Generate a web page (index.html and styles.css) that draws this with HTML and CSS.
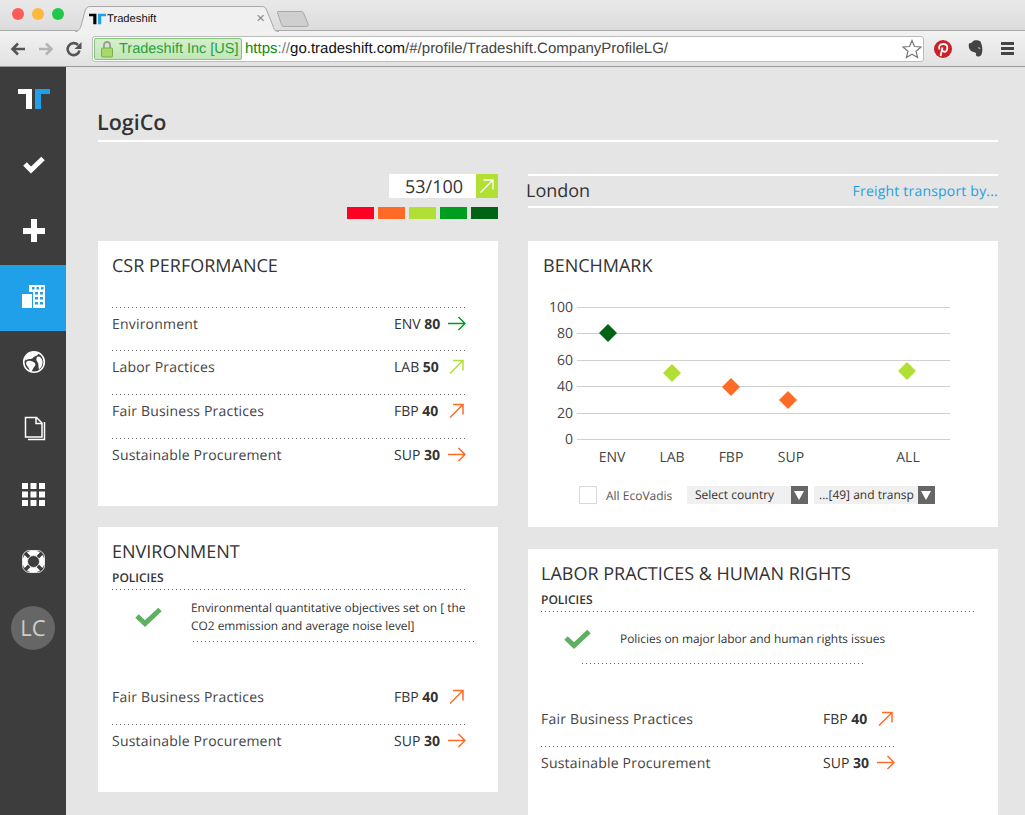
FILE: index.html
```html
<!DOCTYPE html>
<html lang="en">
<head>
	<meta charset="UTF-8">
	<title>Tradeshift</title>
	<link rel="stylesheet" href="styles.css">
</head>
<body>

	<!-- Browser window top -->
	<div class="tabstrip">
		<div class="lights">
			<span class="light light-red"></span>
			<span class="light light-yellow"></span>
			<span class="light light-green"></span>
		</div>
		<div class="tab">
			<svg class="tab-shape" width="204" height="26" viewBox="0 0 204 26">
				<path d="M0 25.500C3 25.500 4.500 24 6 20L10 5C11 2 12.500 .5 15 .5H187C190 .5 191 2 192 5L198 20C199 24 200 25.500 204 25.500" fill="#f0f0f0" stroke="#a8a8a8"/>
			</svg>
			<svg class="favicon" width="17" height="12" viewBox="0 0 32 20">
				<path d="M0 0H14V20H8V5H0Z" fill="#000"/>
				<path d="M17 0H32V5H23V20H17Z" fill="#1fa0e8"/>
			</svg>
			<span class="tab-title">Tradeshift</span>
			<span class="tab-close">&#215;</span>
		</div>
		<svg class="newtab" width="32" height="18" viewBox="0 0 32 18">
			<path d="M1 1.500H24C26 1.500 26.500 2.500 27 4L31 14C31.500 16 30.500 16.500 29 16.500H7C5.500 16.500 5 16 4.500 14.500L.5 3C.3 2 .5 1.500 1 1.500Z" fill="#cfcfcf" stroke="#a8a8a8"/>
		</svg>
	</div>

	<div class="toolbar">
		<svg class="nav-icon" width="16" height="14" viewBox="0 0 16 14"><path d="M15 7H3M8 1.500L2.500 7L8 12.500" fill="none" stroke="#555" stroke-width="2.600"/></svg>
		<svg class="nav-icon nav-forward" width="16" height="14" viewBox="0 0 16 14"><path d="M1 7H13M8 1.500L13.500 7L8 12.500" fill="none" stroke="#b4b4b4" stroke-width="2.600"/></svg>
		<svg class="nav-icon nav-reload" width="16" height="16" viewBox="0 0 16 16"><path d="M13.500 9.500A6 6 0 1 1 12 4" fill="none" stroke="#555" stroke-width="2.600"/><path d="M15.500 1V8H8.500Z" fill="#555"/></svg>
		<div class="omnibox">
			<div class="ev-chip">
				<svg width="12" height="18" viewBox="0 0 12 18"><path d="M3 8V5A3 3 0 0 1 9 5V8" fill="none" stroke="#9a9a9a" stroke-width="1.800"/><rect x=".5" y="8" width="11" height="9" rx="1" fill="#a5d96b" stroke="#7cb04a"/></svg>
				<span>Tradeshift Inc [US]</span>
			</div>
			<div class="url"><span class="url-https">https</span><span class="url-sep">://</span><span class="url-host">go.tradeshift.com</span><span class="url-path">/#/profile/Tradeshift.CompanyProfileLG/</span></div>
			<svg class="star" width="20" height="20" viewBox="0 0 20 20"><path d="M10 1.500L12.500 7.500L19 8L14 12.200L15.600 18.500L10 15.200L4.400 18.500L6 12.200L1 8L7.500 7.500Z" fill="#fff" stroke="#777" stroke-width="1.200"/></svg>
		</div>
		<svg class="ext-pin" width="18" height="18" viewBox="0 0 18 18"><circle cx="9" cy="9" r="9" fill="#cb2027"/><path d="M6.500 16L8.500 7.500M5.500 9.500C4 6 6.500 4 9.300 4C12 4 13.700 5.700 13.300 8.500C13 10.700 11.500 12 10 11.700C9 11.500 8.500 11 8.300 10.300" fill="none" stroke="#fff" stroke-width="1.800"/></svg>
		<svg class="ext-note" width="15" height="17" viewBox="0 0 15 17"><path d="M3 3L6 .5C8 0 11 .3 12.500 1.500C14 5 15 9 14 13C13.500 15.500 12 17 9.500 16.500C8 16 7.500 14.500 8 13C6 12 3 11.500 2 10C.5 8 .5 5 1 3.500Z" fill="#444"/><path d="M10 8C11 7.500 12 8 12 9" fill="none" stroke="#ddd"/></svg>
		<div class="menu-icon"><span></span><span></span><span></span></div>
	</div>

	<div class="app">
		<!-- Sidebar -->
		<div class="sidebar">
			<div class="side-item side-logo">
				<svg width="32" height="20" viewBox="0 0 32 20">
					<path d="M0 0H14V20H8V5H0Z" fill="#fff"/>
					<path d="M17 0H32V5H23V20H17Z" fill="#1fa0e8"/>
				</svg>
			</div>
			<div class="side-item">
				<svg width="30" height="30" viewBox="0 0 30 30"><path d="M7 13L13 19L25 7.500" fill="none" stroke="#fff" stroke-width="5"/></svg>
			</div>
			<div class="side-item">
				<svg width="30" height="30" viewBox="0 0 30 30"><path d="M13 2H19V11H27V17H19V25H13V17H5V11H13Z" fill="#fff"/></svg>
			</div>
			<div class="side-item side-active">
				<svg width="30" height="30" viewBox="0 0 30 30">
					<rect x="4" y="11" width="10" height="14" fill="#fff"/>
					<path d="M11 2H27V25H15V9H11Z" fill="#fff"/>
					<g fill="#1fa0e8">
						<rect x="14" y="4" width="2.500" height="2.500"/><rect x="18.500" y="4" width="2.500" height="2.500"/><rect x="23" y="4" width="2.500" height="2.500"/>
						<rect x="17" y="9" width="3" height="2.500"/><rect x="22" y="9" width="3" height="2.500"/>
						<rect x="17" y="14" width="3" height="2.500"/><rect x="22" y="14" width="3" height="2.500"/>
						<rect x="17" y="19" width="3" height="2.500"/><rect x="22" y="19" width="3" height="2.500"/>
					</g>
				</svg>
			</div>
			<div class="side-item">
				<svg width="30" height="30" viewBox="0 0 30 30">
					<circle cx="16" cy="13" r="10.300" fill="none" stroke="#fff" stroke-width="1.600"/>
					<path d="M10 4C14 2 19 2.500 20.500 5C18.500 7.500 16 7 15 9C13 10.500 9.500 9.500 7.500 11.500C6.500 8.500 8 5.500 10 4Z" fill="#fff"/>
					<path d="M8.500 12.500C11 11 13.500 12 15.500 13C18 14 18 16.500 16 18C15 19.500 14.500 21.500 13 23C11 21.500 11.500 19.500 10 18C8.500 16.500 7.500 14.500 8.500 12.500Z" fill="#fff"/>
					<path d="M19.500 7.500C21.500 7 24 9 24.500 12C25 15 23.500 18.500 21 20.500C20 17.500 21 14.500 19.500 13C18 11.500 18 9 19.500 7.500Z" fill="#fff"/>
				</svg>
			</div>
			<div class="side-item">
				<svg width="30" height="30" viewBox="0 0 30 30">
					<path d="M10 24.500H26.500V7" fill="none" stroke="#fff" stroke-width="1.500"/>
					<path d="M7.500 2.500H18.500L24 8V22H7.500Z" fill="#3d3d3d" stroke="#fff" stroke-width="1.500"/>
					<path d="M18 2.500V8.500H24" fill="none" stroke="#fff" stroke-width="1.500"/>
				</svg>
			</div>
			<div class="side-item">
				<svg width="30" height="30" viewBox="0 0 30 30">
					<g fill="#fff">
						<rect x="4" y="2" width="6" height="6"/><rect x="12.500" y="2" width="6" height="6"/><rect x="21" y="2" width="6" height="6"/>
						<rect x="4" y="10.500" width="6" height="6"/><rect x="12.500" y="10.500" width="6" height="6"/><rect x="21" y="10.500" width="6" height="6"/>
						<rect x="4" y="19" width="6" height="6"/><rect x="12.500" y="19" width="6" height="6"/><rect x="21" y="19" width="6" height="6"/>
					</g>
				</svg>
			</div>
			<div class="side-item">
				<svg width="30" height="30" viewBox="0 0 30 30">
					<circle cx="15.500" cy="14.500" r="11" fill="#fff"/>
					<path d="M5 4L26 25M26 4L5 25" stroke="#3d3d3d" stroke-width="3.600"/>
					<rect x="4.500" y="3.500" width="22" height="22" rx="7" fill="none" stroke="#e4e4e4"/>
					<circle cx="15.500" cy="14.500" r="6" fill="#3d3d3d" stroke="#e4e4e4"/>
				</svg>
			</div>
			<div class="side-item">
				<div class="avatar">LC</div>
			</div>
		</div>

		<!-- Main -->
		<div class="main">
			<h1 class="page-title"><span>LogiCo</span></h1>
			<div class="columns">
				<div class="col col-left">
					<div class="score-head">
						<div class="score">
							<div class="score-value">53/100</div>
							<div class="score-arrow">
								<svg width="16" height="16" viewBox="0 0 16 16"><path d="M1.500 14.500L14 2M4.500 2H14V11.500" fill="none" stroke="#fff" stroke-width="1.300"/></svg>
							</div>
						</div>
						<div class="scale">
							<span class="scale-red"></span>
							<span class="scale-orange"></span>
							<span class="scale-lime"></span>
							<span class="scale-green"></span>
							<span class="scale-dark"></span>
						</div>
					</div>

					<div class="card card-csr">
						<div class="card-title">CSR Performance</div>
						<div class="rows rows-csr">
							<div class="row"><span class="row-name">Environment</span><span class="row-val">ENV <b>80</b></span>
								<svg class="arrow arrow-green" width="20" height="20" viewBox="0 0 20 20"><path d="M2 9.500H18.500M12.500 3L19 9.500L12.500 16"/></svg></div>
							<div class="row"><span class="row-name">Labor Practices</span><span class="row-val">LAB <b>50</b></span>
								<svg class="arrow arrow-lime" width="20" height="20" viewBox="0 0 20 20"><path d="M4 16.500L17 3.500M7 3.500H17V13.500"/></svg></div>
							<div class="row"><span class="row-name">Fair Business Practices</span><span class="row-val">FBP <b>40</b></span>
								<svg class="arrow arrow-orange" width="20" height="20" viewBox="0 0 20 20"><path d="M4 16.500L17 3.500M7 3.500H17V13.500"/></svg></div>
							<div class="row"><span class="row-name">Sustainable Procurement</span><span class="row-val">SUP <b>30</b></span>
								<svg class="arrow arrow-orange" width="20" height="20" viewBox="0 0 20 20"><path d="M2 9.500H18.500M12.500 3L19 9.500L12.500 16"/></svg></div>
						</div>
					</div>

					<div class="card card-env">
						<div class="card-title">Environment</div>
						<div class="policies-label">Policies</div>
						<div class="dots dots-env"></div>
						<div class="policy">
							<svg class="policy-check" width="27" height="20" viewBox="0 0 27 20"><path d="M2 9L10 16.500L25 2.500" fill="none" stroke="#5cb05f" stroke-width="5"/></svg>
							<p>Environmental quantitative objectives set on [ the CO2 emmission and average noise level]</p>
						</div>
						<div class="dots dots-short-env"></div>
						<div class="rows rows-policy">
							<div class="row"><span class="row-name">Fair Business Practices</span><span class="row-val">FBP <b>40</b></span>
								<svg class="arrow arrow-orange" width="20" height="20" viewBox="0 0 20 20"><path d="M4 16.500L17 3.500M7 3.500H17V13.500"/></svg></div>
							<div class="row"><span class="row-name">Sustainable Procurement</span><span class="row-val">SUP <b>30</b></span>
								<svg class="arrow arrow-orange" width="20" height="20" viewBox="0 0 20 20"><path d="M2 9.500H18.500M12.500 3L19 9.500L12.500 16"/></svg></div>
						</div>
					</div>
				</div>

				<div class="col col-right">
					<div class="location-head">
						<div class="location">
							<span class="location-city">London</span>
							<a class="location-link">Freight transport by...</a>
						</div>
					</div>

					<div class="card card-bench">
						<div class="card-title">Benchmark</div>
						<svg class="chart" width="440" height="175" viewBox="0 0 440 175">
							<g stroke="#d0d0d0">
								<path d="M34 12.500H407"/><path d="M34 38.500H407"/><path d="M34 65.500H407"/>
								<path d="M34 91.500H407"/><path d="M34 118.500H407"/><path d="M34 144.500H407"/>
							</g>
							<g class="chart-y" text-anchor="end">
								<text x="30" y="17">100</text><text x="30" y="43">80</text><text x="30" y="70">60</text>
								<text x="30" y="96">40</text><text x="30" y="123">20</text><text x="30" y="149">0</text>
							</g>
							<g class="chart-x" text-anchor="middle">
								<text x="69" y="167">ENV</text><text x="129" y="167">LAB</text><text x="188" y="167">FBP</text>
								<text x="248" y="167">SUP</text><text x="365" y="167">ALL</text>
							</g>
							<path d="M65 29L74 38L65 47L56 38Z" fill="#006414"/>
							<path d="M129 69L138 78L129 87L120 78Z" fill="#b2df33"/>
							<path d="M188 83L197 92L188 101L179 92Z" fill="#ff6b26"/>
							<path d="M245 96L254 105L245 114L236 105Z" fill="#ff6b26"/>
							<path d="M364 67L373 76L364 85L355 76Z" fill="#b2df33"/>
						</svg>
						<div class="filters">
							<span class="checkbox"></span>
							<span class="filter-label">All EcoVadis</span>
							<div class="select select-country"><span>Select country</span><i></i></div>
							<div class="select select-sector"><span>...[49] and transp</span><i></i></div>
						</div>
					</div>

					<div class="card card-labor">
						<div class="card-title">Labor Practices &amp; Human Rights</div>
						<div class="policies-label">Policies</div>
						<div class="dots dots-labor"></div>
						<div class="policy">
							<svg class="policy-check" width="27" height="20" viewBox="0 0 27 20"><path d="M2 9L10 16.500L25 2.500" fill="none" stroke="#5cb05f" stroke-width="5"/></svg>
							<p>Policies on major labor and human rights issues</p>
						</div>
						<div class="dots dots-short-labor"></div>
						<div class="rows rows-policy">
							<div class="row"><span class="row-name">Fair Business Practices</span><span class="row-val">FBP <b>40</b></span>
								<svg class="arrow arrow-orange" width="20" height="20" viewBox="0 0 20 20"><path d="M4 16.500L17 3.500M7 3.500H17V13.500"/></svg></div>
							<div class="row"><span class="row-name">Sustainable Procurement</span><span class="row-val">SUP <b>30</b></span>
								<svg class="arrow arrow-orange" width="20" height="20" viewBox="0 0 20 20"><path d="M2 9.500H18.500M12.500 3L19 9.500L12.500 16"/></svg></div>
						</div>
					</div>
				</div>
			</div>
		</div>
	</div>

</body>
</html>
```

FILE: styles.css
```css
/* Global */
* {
	box-sizing: border-box;
}

html, body {
	height: 100%;
}

body {
	margin: 0;
	overflow: hidden;
	font-family: 'Open Sans', sans-serif;
	text-rendering: geometricPrecision;
	color: #333;
	background: #e5e5e5;
	display: flex;
	flex-direction: column;
}

/* Browser tab strip */
.tabstrip {
	height: 31px;
	flex: none;
	display: flex;
	align-items: flex-start;
	background: linear-gradient(#e9e9e9, #dcdcdc);
	border-bottom: 1px solid #ababab;
	font-family: 'Liberation Sans', sans-serif;
}

.lights {
	display: flex;
	gap: 8px;
	padding: 8px 0 0 12px;
	width: 75px;
}

.light {
	width: 12px;
	height: 12px;
	border-radius: 50%;
}

.light-red { background: #fc5b57; }
.light-yellow { background: #fdb83d; }
.light-green { background: #1fc94a; }

.tab {
	position: relative;
	width: 204px;
	height: 31px;
	margin-top: 6px;
	display: flex;
	align-items: center;
	padding: 0 0 6px 14px;
	font-size: 11.200px;
	color: #111;
}

.tab-shape {
	position: absolute;
	left: 0;
	top: 0;
}

.favicon, .tab-title, .tab-close {
	position: relative;
}

.tab-title {
	margin: 1px 0 0 1px;
	flex: 1;
}

.tab-close {
	font-size: 15px;
	color: #888;
	margin-right: 14px;
}

.newtab {
	margin: 10px 0 0 -2px;
}

/* Browser toolbar */
.toolbar {
	height: 36px;
	flex: none;
	display: flex;
	align-items: center;
	background: linear-gradient(#f2f2f2, #e2e2e2);
	border-bottom: 1px solid #9b9b9b;
	padding-left: 10px;
	font-family: 'Liberation Sans', sans-serif;
}

.nav-forward {
	margin-left: 12px;
}

.nav-reload {
	margin-left: 12px;
}

.omnibox {
	width: 832px;
	height: 26px;
	margin-left: 10px;
	background: #fff;
	border: 1px solid #bdbdbd;
	border-radius: 3px;
	display: flex;
	align-items: center;
	padding-left: 1px;
}

.ev-chip {
	height: 22px;
	width: 148px;
	flex: none;
	display: flex;
	align-items: center;
	gap: 6px;
	padding-left: 6px;
	background: linear-gradient(#d4efcc, #c2e6b8);
	border: 1px solid #86c47c;
	border-radius: 2px;
	color: #2aa03c;
	font-size: 14.500px;
	white-space: nowrap;
}

.ev-chip span {
	margin-top: 1px;
}

.url {
	flex: 1;
	margin-left: 3px;
	font-size: 15px;
	white-space: nowrap;
	color: #444;
}

.url-https { color: #0a8a0a; }
.url-sep { color: #777; }
.url-host { color: #111; }

.star {
	margin-right: 1px;
	flex: none;
}

.ext-pin {
	margin-left: 10px;
}

.ext-note {
	margin-left: 16px;
}

.menu-icon {
	width: 13px;
	margin-left: 18px;
	display: flex;
	flex-direction: column;
	gap: 2px;
}

.menu-icon span {
	height: 3px;
	background: #444;
}

/* App layout */
.app {
	flex: 1;
	display: flex;
	min-height: 0;
}

/* Sidebar */
.sidebar {
	width: 66px;
	flex: none;
	background: #3d3d3d;
}

.side-item {
	height: 66px;
	display: flex;
	align-items: center;
	justify-content: center;
}

.side-logo svg {
	margin: 0 0 2px 2px;
}

.side-active {
	background: #1fa0e8;
}

.avatar {
	width: 44px;
	height: 44px;
	border-radius: 50%;
	background: #666;
	color: #ccc;
	font-size: 22px;
	display: flex;
	align-items: center;
	justify-content: center;
}

/* Main */
.main {
	flex: 1;
	min-width: 0;
	padding: 0 27px 0 32px;
	overflow: hidden;
}

.page-title {
	margin: 0;
	padding: 41px 0 2px;
	font-size: 21.500px;
	font-weight: 600;
	line-height: 30px;
	border-bottom: 2px solid #fff;
}

.page-title span {
	margin-left: -1px;
}

.columns {
	display: flex;
	gap: 30px;
	margin-top: 32px;
}

.col-left {
	width: 400px;
}

.col-right {
	width: 470px;
}

/* Score */
.score-head {
	height: 67px;
	display: flex;
	flex-direction: column;
	align-items: flex-end;
}

.score {
	display: flex;
	height: 24px;
}

.score-value {
	width: 87px;
	padding-left: 3px;
	background: #fff;
	font-size: 18px;
	line-height: 26px;
	text-align: center;
}

.score-arrow {
	width: 22px;
	background: #b2df33;
	display: flex;
	align-items: center;
	justify-content: center;
}

.scale {
	display: flex;
	gap: 4px;
	margin-top: 9px;
}

.scale span {
	width: 27px;
	height: 12px;
}

.scale-red { background: #ff0022; }
.scale-orange { background: #ff6b26; }
.scale-lime { background: #b2df33; }
.scale-green { background: #009e1e; }
.scale-dark { background: #006414; }

/* Location */
.location-head {
	height: 67px;
}

.location {
	height: 34px;
	display: flex;
	align-items: center;
	justify-content: space-between;
	border-top: 2px solid #fff;
	border-bottom: 2px solid #fff;
}

.location-city {
	font-size: 18px;
	margin-left: -2px;
}

.location-link {
	font-size: 14px;
	letter-spacing: .2px;
	color: #1fa0e0;
}

/* Cards */
.card {
	background: #fff;
	padding: 15px 14px 0;
}

.card-csr { height: 265px; }
.card-env { height: 265px; margin-top: 21px; }
.card-bench { height: 286px; padding-left: 15px; }
.card-labor { height: 266px; margin-top: 22px; padding-left: 13px; }

.card-title {
	font-size: 18px;
	line-height: 20px;
	text-transform: uppercase;
}

.policies-label {
	margin-top: 8px;
	font-size: 12px;
	font-weight: 600;
	line-height: 16px;
	text-transform: uppercase;
}

/* Dotted rules */
.dots, .row {
	background-image: linear-gradient(to right, #666 1px, transparent 1px);
	background-size: 4px 1px;
	background-repeat: repeat-x;
}

.dots {
	height: 1px;
}

.dots-env { margin-top: 3px; width: 353px; }
.dots-labor { margin-top: 3px; width: 434px; }
.dots-short-env { margin-left: 81px; width: 284px; }
.dots-short-labor { margin-left: 41px; width: 284px; }

/* Rows */
.rows {
	width: 353px;
}

.rows-csr {
	margin-top: 31px;
}

.rows-csr .row:first-child {
	height: 43px;
}

.rows-policy {
	margin-top: 38px;
}

.rows-policy .row:first-child {
	background-image: none;
}

.row {
	height: 44px;
	display: flex;
	align-items: flex-start;
	padding-top: 8px;
	font-size: 14px;
	line-height: 20px;
}

.row-name {
	flex: 1;
	color: #444;
	letter-spacing: .2px;
}

.row-val {
	width: 52px;
	flex: none;
}

.row-val b {
	font-weight: 700;
}

.arrow {
	flex: none;
	margin: -1px -1px 0 0;
	fill: none;
	stroke-width: 1.500;
}

.arrow-green { stroke: #009e1e; }
.arrow-lime { stroke: #b2df33; }
.arrow-orange { stroke: #ff6b26; }

/* Policy */
.policy {
	height: 51px;
	display: flex;
	align-items: center;
	padding-top: 3px;
}

.policy-check {
	margin-left: 23px;
	flex: none;
}

.policy p {
	margin: 0 0 0 29px;
	width: 290px;
	font-size: 11.900px;
	line-height: 18px;
}

/* Chart */
.chart {
	display: block;
	margin-top: 19px;
}

.chart text {
	font-family: 'Open Sans', sans-serif;
	fill: #444;
	font-size: 14px;
}

/* Filters */
.filters {
	display: flex;
	align-items: center;
	margin: 16px 0 0 36px;
}

.checkbox {
	width: 18px;
	height: 18px;
	border: 1px solid #d8d8d8;
}

.filter-label {
	margin-left: 9px;
	width: 81px;
	font-size: 12px;
	color: #555;
}

.select {
	height: 18px;
	width: 121px;
	display: flex;
	background: #f0f0f0;
	font-size: 12px;
	line-height: 17px;
	white-space: nowrap;
}

.select span {
	flex: 1;
	overflow: hidden;
}

.select-country span { padding-left: 8px; }
.select-sector span { padding-left: 5px; }
.select-sector { margin-left: 6px; }

.select i {
	width: 17px;
	flex: none;
	position: relative;
	background: #666;
}

.select i::after {
	content: '';
	position: absolute;
	left: 3px;
	top: 5px;
	border-left: 5.500px solid transparent;
	border-right: 5.500px solid transparent;
	border-top: 9px solid #fff;
}
```
